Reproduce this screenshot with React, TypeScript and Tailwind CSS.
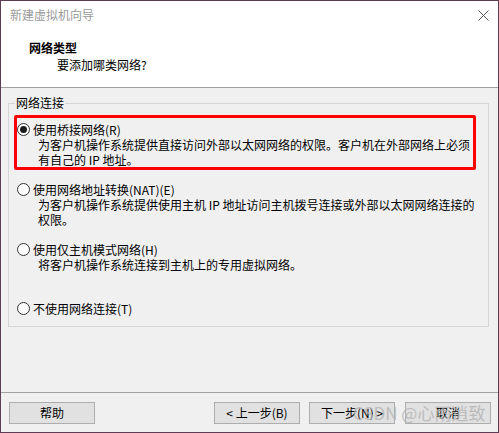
import React from "react";

const FONT = { fontFamily: '"Noto Sans CJK SC", "Noto Sans", sans-serif' };

function Radio({ checked }: { checked?: boolean }) {
  return (
    <span className="w-[13px] h-[13px] rounded-full border border-[#333333] bg-white flex items-center justify-center shrink-0">
      {checked ? <span className="w-[7px] h-[7px] rounded-full bg-[#1a1a1a]" /> : null}
    </span>
  );
}

function Option({
  label,
  lines,
  checked,
}: {
  label: string;
  lines: string[];
  checked?: boolean;
}) {
  return (
    <div className="flex flex-col">
      <div className="flex items-center h-[15px] gap-[3px]">
        <Radio checked={checked} />
        <span className="leading-[15px] whitespace-nowrap">{label}</span>
      </div>
      {lines.map((l, i) => (
        <div key={i} className="pl-[21px] leading-[15px] h-[15px] whitespace-nowrap">
          {l}
        </div>
      ))}
    </div>
  );
}

function Btn({ children }: { children: React.ReactNode }) {
  return (
    <button className="w-[86px] h-[22px] bg-[#e1e1e1] border border-[#adadad] text-[12px] text-black flex items-center justify-center leading-none">
      {children}
    </button>
  );
}

export default function App() {
  return (
    <div
      className="w-[499px] h-[433px] border border-[#5e3c55] flex flex-col bg-[#f0f0f0] text-[12px] text-black overflow-hidden"
      style={FONT}
    >
      {/* Header */}
      <div className="h-[87px] bg-white border-b border-[#a0a0a0] flex flex-col shrink-0">
        <div className="h-[28px] flex items-center justify-between pl-[9px] pr-[9px]">
          <span className="text-[#9a9a9a] leading-none">新建虚拟机向导</span>
          <svg width="11" height="11" viewBox="0 0 11 11" className="mt-[1px]">
            <path d="M0.5 0.5 L10.5 10.5 M10.5 0.5 L0.5 10.5" stroke="#555555" strokeWidth="1" fill="none" />
          </svg>
        </div>
        <div className="mt-[11px] pl-[28px] font-bold leading-[15px]">网络类型</div>
        <div className="mt-[2px] pl-[56px] leading-[15px]">要添加哪类网络?</div>
      </div>

      {/* Body */}
      <div className="h-[304px] pt-[7px] pl-[7px] shrink-0">
        <fieldset className="w-[481px] border border-[#d5d5d5] pb-[10px]">
          <legend className="ml-[6px] px-[1px] leading-[16px]">网络连接</legend>
          <div className="mt-[4px] ml-[5px] w-[462px] border-[3px] border-[#ff0000] rounded-[2px] pt-[4px]">
            <Option
              checked
              label="使用桥接网络(R)"
              lines={[
                "为客户机操作系统提供直接访问外部以太网网络的权限。客户机在外部网络上必须",
                "有自己的 IP 地址。",
              ]}
            />
          </div>
          <div className="pl-[8px]">
            <div className="mt-[12px]">
              <Option
                label="使用网络地址转换(NAT)(E)"
                lines={[
                  "为客户机操作系统提供使用主机 IP 地址访问主机拨号连接或外部以太网网络连接的",
                  "权限。",
                ]}
              />
            </div>
            <div className="mt-[15px]">
              <Option
                label="使用仅主机模式网络(H)"
                lines={["将客户机操作系统连接到主机上的专用虚拟网络。"]}
              />
            </div>
            <div className="mt-[29px]">
              <Option label="不使用网络连接(T)" lines={[]} />
            </div>
          </div>
        </fieldset>
      </div>

      {/* Footer */}
      <div className="relative flex-1 border-t border-[#a0a0a0] pt-[9px] pl-[8px] pr-[7px] flex items-start">
        <Btn>帮助</Btn>
        <div className="ml-auto flex gap-[9px]">
          <Btn>&lt; 上一步(B)</Btn>
          <Btn>下一步(N) &gt;</Btn>
          <div className="ml-[1px]">
            <Btn>取消</Btn>
          </div>
        </div>
        <div className="absolute left-[352px] top-[10px] text-[17px] leading-[20px] text-[#b4b4b4] opacity-80 whitespace-nowrap pointer-events-none">
          CSDN @心雨逍致
        </div>
      </div>
    </div>
  );
}
